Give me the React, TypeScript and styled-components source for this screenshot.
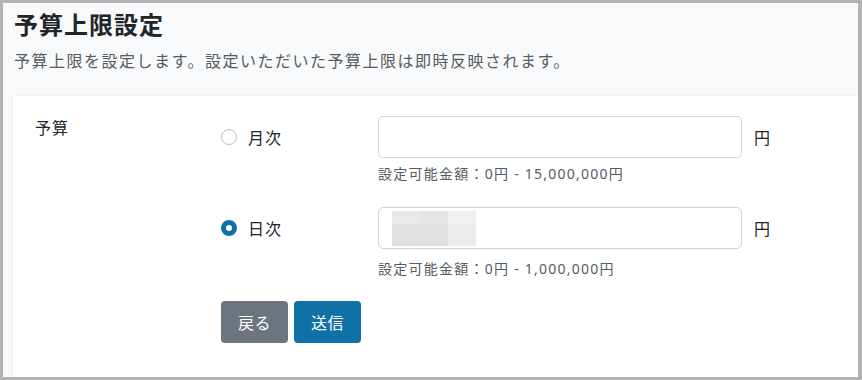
import React, { useState } from 'react';
import styled, { createGlobalStyle } from 'styled-components';

const GlobalStyle = createGlobalStyle`
  html, body {
    margin: 0;
    padding: 0;
    background: #ffffff;
  }
  * {
    box-sizing: border-box;
  }
`;

const Frame = styled.div`
  width: 862px;
  height: 380px;
  border: 3px solid #b2b2b2;
  border-right-width: 4px;
  background: #f8f9fa;
  font-family: "Noto Sans", "Noto Sans CJK JP", sans-serif;
  color: #212529;
  overflow: hidden;
  display: flex;
  flex-direction: column;
`;

const Header = styled.div`
  padding: 6px 0 0 11px;
  height: 93px;
`;

const Title = styled.h1`
  margin: 0;
  font-size: 24px;
  line-height: 32px;
  font-weight: 700;
  letter-spacing: 1px;
  color: #212529;
`;

const Lead = styled.p`
  margin: 8px 0 0;
  font-size: 16px;
  line-height: 24px;
  letter-spacing: 1.5px;
  color: #555b61;
`;

const Card = styled.div`
  margin-left: 10px;
  flex: 1;
  background: #ffffff;
  box-shadow: 0 0 4px rgba(0, 0, 0, 0.07);
  padding: 20px 22px;
  display: grid;
  grid-template-columns: 186px 1fr;
`;

const FieldLabel = styled.div`
  font-size: 16px;
  line-height: 24px;
  letter-spacing: 1px;
`;

const Options = styled.div`
  display: flex;
  flex-direction: column;
`;

const OptionRow = styled.div<{ $last?: boolean }>`
  display: grid;
  grid-template-columns: 157px 364px auto;
  margin-bottom: ${p => (p.$last ? '22px' : '23px')};
`;

const RadioLabel = styled.label`
  display: flex;
  align-items: center;
  gap: 11px;
  height: 42px;
  font-size: 16px;
  letter-spacing: 1px;
  cursor: pointer;
`;

const RadioDot = styled.span<{ $checked: boolean }>`
  width: 16px;
  height: 16px;
  border-radius: 50%;
  flex-shrink: 0;
  border: ${p => (p.$checked ? '5px solid #0f71a6' : '1px solid #b9bcbf')};
  background: #ffffff;
`;

const InputCol = styled.div`
  display: flex;
  flex-direction: column;
`;

const InputBox = styled.div`
  position: relative;
  height: 42px;
  border: 1px solid #ced4da;
  border-radius: 5px;
  background: #ffffff;
`;

const TextInput = styled.input`
  width: 100%;
  height: 100%;
  border: none;
  background: transparent;
  padding: 0 12px;
  font-size: 16px;
  font-family: inherit;
  outline: none;
`;

const Blur = styled.div`
  position: absolute;
  left: 13px;
  top: 3px;
  display: grid;
  grid-template-columns: repeat(3, 28px);
  grid-template-rows: 13px 22px;
  pointer-events: none;
`;

const BlurCell = styled.span<{ $c: string }>`
  background: ${p => p.$c};
`;

const Unit = styled.div`
  display: flex;
  align-items: center;
  height: 42px;
  margin-left: 12px;
  font-size: 16px;
`;

const Help = styled.div<{ $offset: number }>`
  margin-top: ${p => p.$offset}px;
  font-size: 14px;
  line-height: 20px;
  letter-spacing: 1.25px;
  color: #555b61;
`;

const Buttons = styled.div`
  display: flex;
  gap: 6px;
`;

const Button = styled.button<{ $variant: 'secondary' | 'primary' }>`
  width: 67px;
  height: 42px;
  border: none;
  border-radius: 4px;
  color: #ffffff;
  font-size: 16px;
  font-family: inherit;
  letter-spacing: 0.5px;
  background: ${p => (p.$variant === 'primary' ? '#0f71a6' : '#6c757d')};
  cursor: pointer;
`;

const blurColors = ['#e9e9e9', '#e5e5e5', '#f0f0f0', '#e0e0e0', '#e0e0e0', '#ebebeb'];

export default function App() {
  const [mode, setMode] = useState<'monthly' | 'daily'>('daily');

  return (
    <>
      <GlobalStyle />
      <Frame>
        <Header>
          <Title>予算上限設定</Title>
          <Lead>予算上限を設定します。設定いただいた予算上限は即時反映されます。</Lead>
        </Header>
        <Card>
          <FieldLabel>予算</FieldLabel>
          <Options>
            <OptionRow>
              <RadioLabel onClick={() => setMode('monthly')}>
                <RadioDot $checked={mode === 'monthly'} />
                月次
              </RadioLabel>
              <InputCol>
                <InputBox>
                  <TextInput />
                </InputBox>
                <Help $offset={6}>設定可能金額：0円 - 15,000,000円</Help>
              </InputCol>
              <Unit>円</Unit>
            </OptionRow>
            <OptionRow $last>
              <RadioLabel onClick={() => setMode('daily')}>
                <RadioDot $checked={mode === 'daily'} />
                日次
              </RadioLabel>
              <InputCol>
                <InputBox>
                  <TextInput />
                  <Blur>
                    {blurColors.map((c, i) => (
                      <BlurCell key={i} $c={c} />
                    ))}
                  </Blur>
                </InputBox>
                <Help $offset={10}>設定可能金額：0円 - 1,000,000円</Help>
              </InputCol>
              <Unit>円</Unit>
            </OptionRow>
            <Buttons>
              <Button $variant="secondary">戻る</Button>
              <Button $variant="primary">送信</Button>
            </Buttons>
          </Options>
        </Card>
      </Frame>
    </>
  );
}
